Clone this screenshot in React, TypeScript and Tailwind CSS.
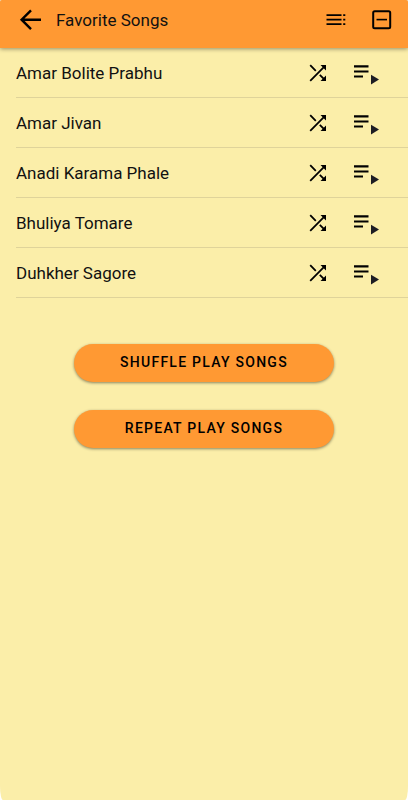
import React from "react";

const songs = [
  "Amar Bolite Prabhu",
  "Amar Jivan",
  "Anadi Karama Phale",
  "Bhuliya Tomare",
  "Duhkher Sagore",
];

const BackIcon = () => (
  <svg viewBox="0 0 24 24" className="size-6" fill="none" stroke="currentColor" strokeWidth="2.4">
    <path d="M13 2.3 3.6 11.7l9.4 9.4M3.6 11.7H23" />
  </svg>
);

const QueueIcon = () => (
  <svg viewBox="0 0 24 24" className="size-6" fill="currentColor">
    <path d="M2.5 6.2h15v1.9h-15zM2.5 10.7h15v1.9h-15zM2.5 15.2h15v1.9h-15zM19.2 6.2h2.1v1.9h-2.1zM19.2 10.7h2.1v1.9h-2.1zM19.2 15.2h2.1v1.9h-2.1z" />
  </svg>
);

const CollapseIcon = () => (
  <svg viewBox="0 0 24 24" className="size-6" fill="none" stroke="currentColor" strokeWidth="2">
    <rect x="3.2" y="3.2" width="17" height="17" rx="1.5" />
    <path d="M6.5 11.6h10.5" strokeWidth="1.6" />
  </svg>
);

const ShuffleIcon = () => (
  <svg viewBox="0 0 24 24" className="size-6" fill="none" stroke="currentColor" strokeWidth="1.8">
    <path d="M4.2 4.2 9.8 9.8M4.2 19.8 18.6 5.4M13.8 13.8l4.8 4.8" />
    <path d="M14.5 4H20v5.5zM20 14.5V20h-5.5z" fill="currentColor" stroke="none" />
  </svg>
);

const PlayFromIcon = () => (
  <svg viewBox="0 0 28 24" className="h-6 w-7" fill="currentColor">
    <path d="M2 4.3h14.5v2.1H2zM2 9.4h14.5v2.1H2zM2 14.4h9v2.1H2z" />
    <path d="M19 13.7 27 18.6 19 23.6z" fill="#1d1d24" />
  </svg>
);

const App: React.FC = () => {
  return (
    <div className="min-h-screen bg-[#fbeea9] font-['Roboto',sans-serif] text-[#111] [border-bottom-left-radius:3px_14px] [border-bottom-right-radius:3px_14px] rounded-t-[2px]">
      <header className="flex h-12 items-center rounded-t-[2px] bg-[#ff9933] pr-3.5 pb-2 pl-[18px] shadow-[0_1px_4px_rgba(0,0,0,0.4)]">
        <button aria-label="Back" className="text-black">
          <BackIcon />
        </button>
        <h1 className="ml-3.5 flex-1 text-[17px] leading-6">Favorite Songs</h1>
        <button aria-label="Queue" className="mr-[22px] text-black">
          <QueueIcon />
        </button>
        <button aria-label="Collapse" className="text-black">
          <CollapseIcon />
        </button>
      </header>

      <main>
        <ul className="pl-4">
          {songs.map((song) => (
            <li
              key={song}
              className="flex h-[50px] items-center border-b border-[#dfd39a] pr-7"
            >
              <span className="flex-1 truncate text-[17px] leading-6">{song}</span>
              <button aria-label={`Shuffle from ${song}`} className="mr-[22px] text-black">
                <ShuffleIcon />
              </button>
              <button aria-label={`Play from ${song}`} className="text-black">
                <PlayFromIcon />
              </button>
            </li>
          ))}
        </ul>

        <div className="mt-[46px] flex flex-col items-center gap-7">
          <button className="h-[38px] w-[260px] rounded-full bg-[#ff9933] pb-0.5 text-sm font-medium tracking-[0.09em] text-black shadow-[0_1px_3px_rgba(0,0,0,0.45)]">
            SHUFFLE PLAY SONGS
          </button>
          <button className="h-[38px] w-[260px] rounded-full bg-[#ff9933] pb-0.5 text-sm font-medium tracking-[0.09em] text-black shadow-[0_1px_3px_rgba(0,0,0,0.45)]">
            REPEAT PLAY SONGS
          </button>
        </div>
      </main>
    </div>
  );
};

export default App;
